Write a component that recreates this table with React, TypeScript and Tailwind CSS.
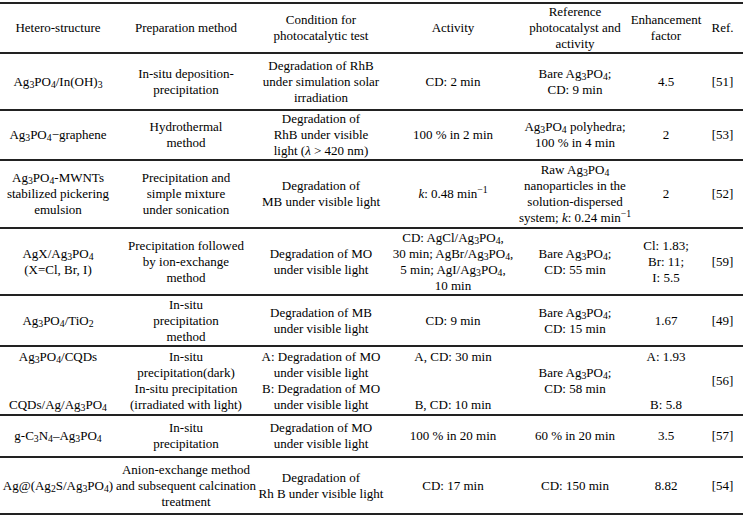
import React from "react";

type Line = React.ReactNode;

const APO = () => (
  <>
    Ag<sub>3</sub>PO<sub>4</sub>
  </>
);

const NB = "\u00a0";

const Cell = ({ lines }: { lines: Line[] }) => (
  <div className="flex flex-col items-center justify-center text-center min-w-0">
    {lines.map((l, i) => (
      <div key={i} className="whitespace-nowrap h-4">
        {l}
      </div>
    ))}
  </div>
);

type Row = { h: string; cells: Line[][] };

const rows: Row[] = [
  {
    h: "h-[50px]",
    cells: [
      ["Hetero-structure"],
      ["Preparation method"],
      ["Condition for", "photocatalytic test"],
      ["Activity"],
      ["Reference", "photocatalyst and", "activity"],
      ["Enhancement", "factor"],
      ["Ref."],
    ],
  },
  {
    h: "h-[57px]",
    cells: [
      [
        <>
          <APO />/In(OH)<sub>3</sub>
        </>,
      ],
      ["In-situ deposition-", "precipitation"],
      ["Degradation of RhB", "under simulation solar", "irradiation"],
      ["CD: 2 min"],
      [
        <>
          Bare <APO />;
        </>,
        "CD: 9 min",
      ],
      ["4.5"],
      ["[51]"],
    ],
  },
  {
    h: "h-[50px]",
    cells: [
      [
        <>
          <APO />−graphene
        </>,
      ],
      ["Hydrothermal", "method"],
      [
        "Degradation of",
        "RhB under visible",
        <>
          light (<i>λ</i> &gt; 420 nm)
        </>,
      ],
      ["100 % in 2 min"],
      [
        <>
          <APO /> polyhedra;
        </>,
        "100 % in 4 min",
      ],
      ["2"],
      ["[53]"],
    ],
  },
  {
    h: "h-[68px]",
    cells: [
      [
        <>
          <APO />-MWNTs
        </>,
        "stabilized pickering",
        "emulsion",
      ],
      ["Precipitation and", "simple mixture", "under sonication"],
      ["Degradation of", "MB under visible light"],
      [
        <>
          <i>k</i>: 0.48 min<sup>−1</sup>
        </>,
      ],
      [
        <>
          Raw <APO />
        </>,
        "nanoparticles in the",
        "solution-dispersed",
        <>
          system; <i>k</i>: 0.24 min<sup>−1</sup>
        </>,
      ],
      ["2"],
      ["[52]"],
    ],
  },
  {
    h: "h-[67px]",
    cells: [
      [
        <>
          AgX/<APO />
        </>,
        "(X=Cl, Br, I)",
      ],
      ["Precipitation followed", "by ion-exchange", "method"],
      ["Degradation of MO", "under visible light"],
      [
        <>
          CD: AgCl/<APO />,
        </>,
        <>
          30 min; AgBr/<APO />,
        </>,
        <>
          5 min; AgI/<APO />,
        </>,
        "10 min",
      ],
      [
        <>
          Bare <APO />;
        </>,
        "CD: 55 min",
      ],
      ["Cl: 1.83;", "Br: 11;", "I: 5.5"],
      ["[59]"],
    ],
  },
  {
    h: "h-[51px]",
    cells: [
      [
        <>
          <APO />/TiO<sub>2</sub>
        </>,
      ],
      ["In-situ", "precipitation", "method"],
      ["Degradation of MB", "under visible light"],
      ["CD: 9 min"],
      [
        <>
          Bare <APO />;
        </>,
        "CD: 15 min",
      ],
      ["1.67"],
      ["[49]"],
    ],
  },
  {
    h: "h-[69px]",
    cells: [
      [
        <>
          <APO />/CQDs
        </>,
        NB,
        NB,
        <>
          CQDs/Ag/<APO />
        </>,
      ],
      [
        "In-situ",
        "precipitation(dark)",
        "In-situ precipitation",
        "(irradiated with light)",
      ],
      [
        "A: Degradation of MO",
        "under visible light",
        "B: Degradation of MO",
        "under visible light",
      ],
      ["A, CD: 30 min", NB, NB, "B, CD: 10 min"],
      [
        <>
          Bare <APO />;
        </>,
        "CD: 58 min",
      ],
      ["A: 1.93", NB, NB, "B: 5.8"],
      ["[56]"],
    ],
  },
  {
    h: "h-[42px]",
    cells: [
      [
        <>
          g-C<sub>3</sub>N<sub>4</sub>–<APO />
        </>,
      ],
      ["In-situ", "precipitation"],
      ["Degradation of MO", "under visible light"],
      ["100 % in 20 min"],
      ["60 % in 20 min"],
      ["3.5"],
      ["[57]"],
    ],
  },
  {
    h: "h-[57px]",
    cells: [
      [
        <>
          Ag@(Ag<sub>2</sub>S/<APO />)
        </>,
      ],
      ["Anion-exchange method", "and subsequent calcination", "treatment"],
      ["Degradation of", "Rh B under visible light"],
      ["CD: 17 min"],
      ["CD: 150 min"],
      ["8.82"],
      ["[54]"],
    ],
  },
];

export default function App() {
  return (
    <div
      className="w-[743px] h-[517px] bg-white text-black pt-[2px] overflow-hidden"
      style={{ fontFamily: '"Liberation Serif", "Times New Roman", serif' }}
    >
      <div className="border-t-2 border-[#222] text-[13px] leading-4">
        {rows.map((r, i) => (
          <div
            key={i}
            className={`grid grid-cols-[116px_140px_130px_134px_110px_72px_41px] border-b-2 border-[#222] ${r.h}`}
          >
            {r.cells.map((c, j) => (
              <Cell key={j} lines={c} />
            ))}
          </div>
        ))}
      </div>
    </div>
  );
}
